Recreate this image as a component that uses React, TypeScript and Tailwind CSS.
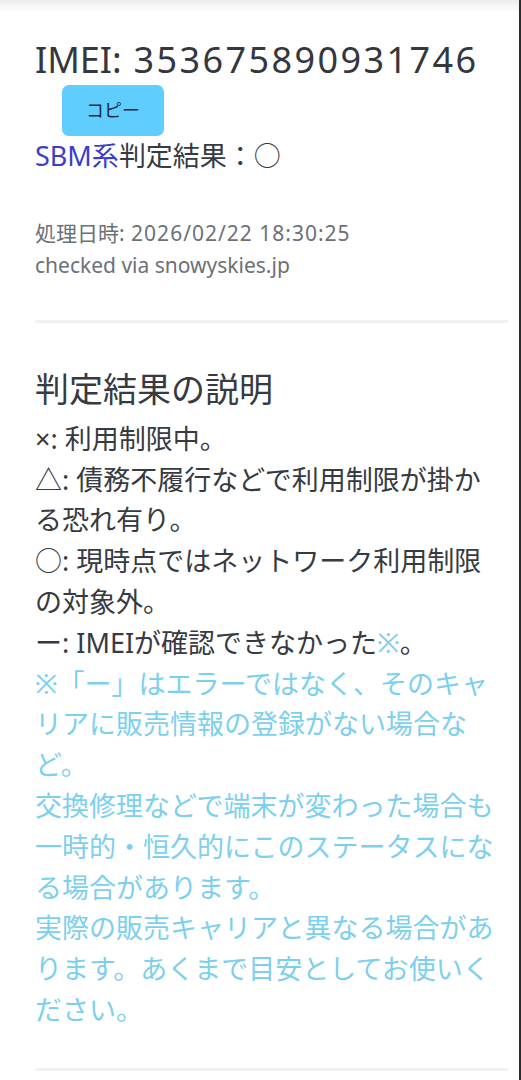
import React from "react";

const font = { fontFamily: "'Noto Sans', 'Noto Sans CJK JP', sans-serif" };

function ResultCard() {
  return (
    <section className="px-[35px]">
      <h2 className="pt-[26px] text-[36px] leading-[44px] text-[#34373e]">
        IMEI:<span className="tracking-[2.4px]"> 353675890931746</span>
      </h2>
      <button className="mt-[3px] ml-[27px] w-[102px] h-[51px] rounded-[7px] bg-[#5fcdfd] text-[18px] text-[#1e2a38] flex items-center justify-center">
        コピー
      </button>
      <p className="text-[27px] leading-[40.8px] text-[#363a42]">
        <span className="text-[#3b3ecc]">SBM系</span>判定結果：○
      </p>
      <div className="mt-[40px] text-[21px] leading-[32px] text-[#6c7078]">
        <p>
          処理日時:<span className="tracking-[1px]"> 2026/02/22 18:30:25</span>
        </p>
        <p>checked via snowyskies.jp</p>
      </div>
      <div className="mt-[39px] mr-[-24px] h-[3px] bg-[#f1f1f1] rounded-full" />
    </section>
  );
}

function Legend() {
  return (
    <section className="px-[35px]">
      <h3 className="mt-[42px] text-[34px] leading-[48px] text-[#363a42]">判定結果の説明</h3>
      <div className="mt-[6px] w-[466px] text-[27px] leading-[40.8px] text-[#363a42]">
        <p>×: 利用制限中。</p>
        <p>△: 債務不履行などで利用制限が掛かる恐れ有り。</p>
        <p>○: 現時点ではネットワーク利用制限の対象外。</p>
        <p>
          ー: IMEIが確認できなかった<span className="text-[#7dcfee]">※</span>。
        </p>
        <div className="text-[#7dcfee]">
          <p>※「ー」はエラーではなく、そのキャリアに販売情報の登録がない場合など。</p>
          <p>交換修理などで端末が変わった場合も一時的・恒久的にこのステータスになる場合があります。</p>
          <p>実際の販売キャリアと異なる場合があります。あくまで目安としてお使いください。</p>
        </div>
      </div>
      <div className="mt-[37px] mr-[-24px] h-[3px] bg-[#f1f1f1] rounded-full" />
    </section>
  );
}

export default function App() {
  return (
    <div style={font} className="min-h-[1080px] w-full bg-white border-r-2 border-[#2b2b2b]">
      <div className="h-[12px] bg-gradient-to-b from-[#ececec] to-white" />
      <ResultCard />
      <Legend />
    </div>
  );
}
